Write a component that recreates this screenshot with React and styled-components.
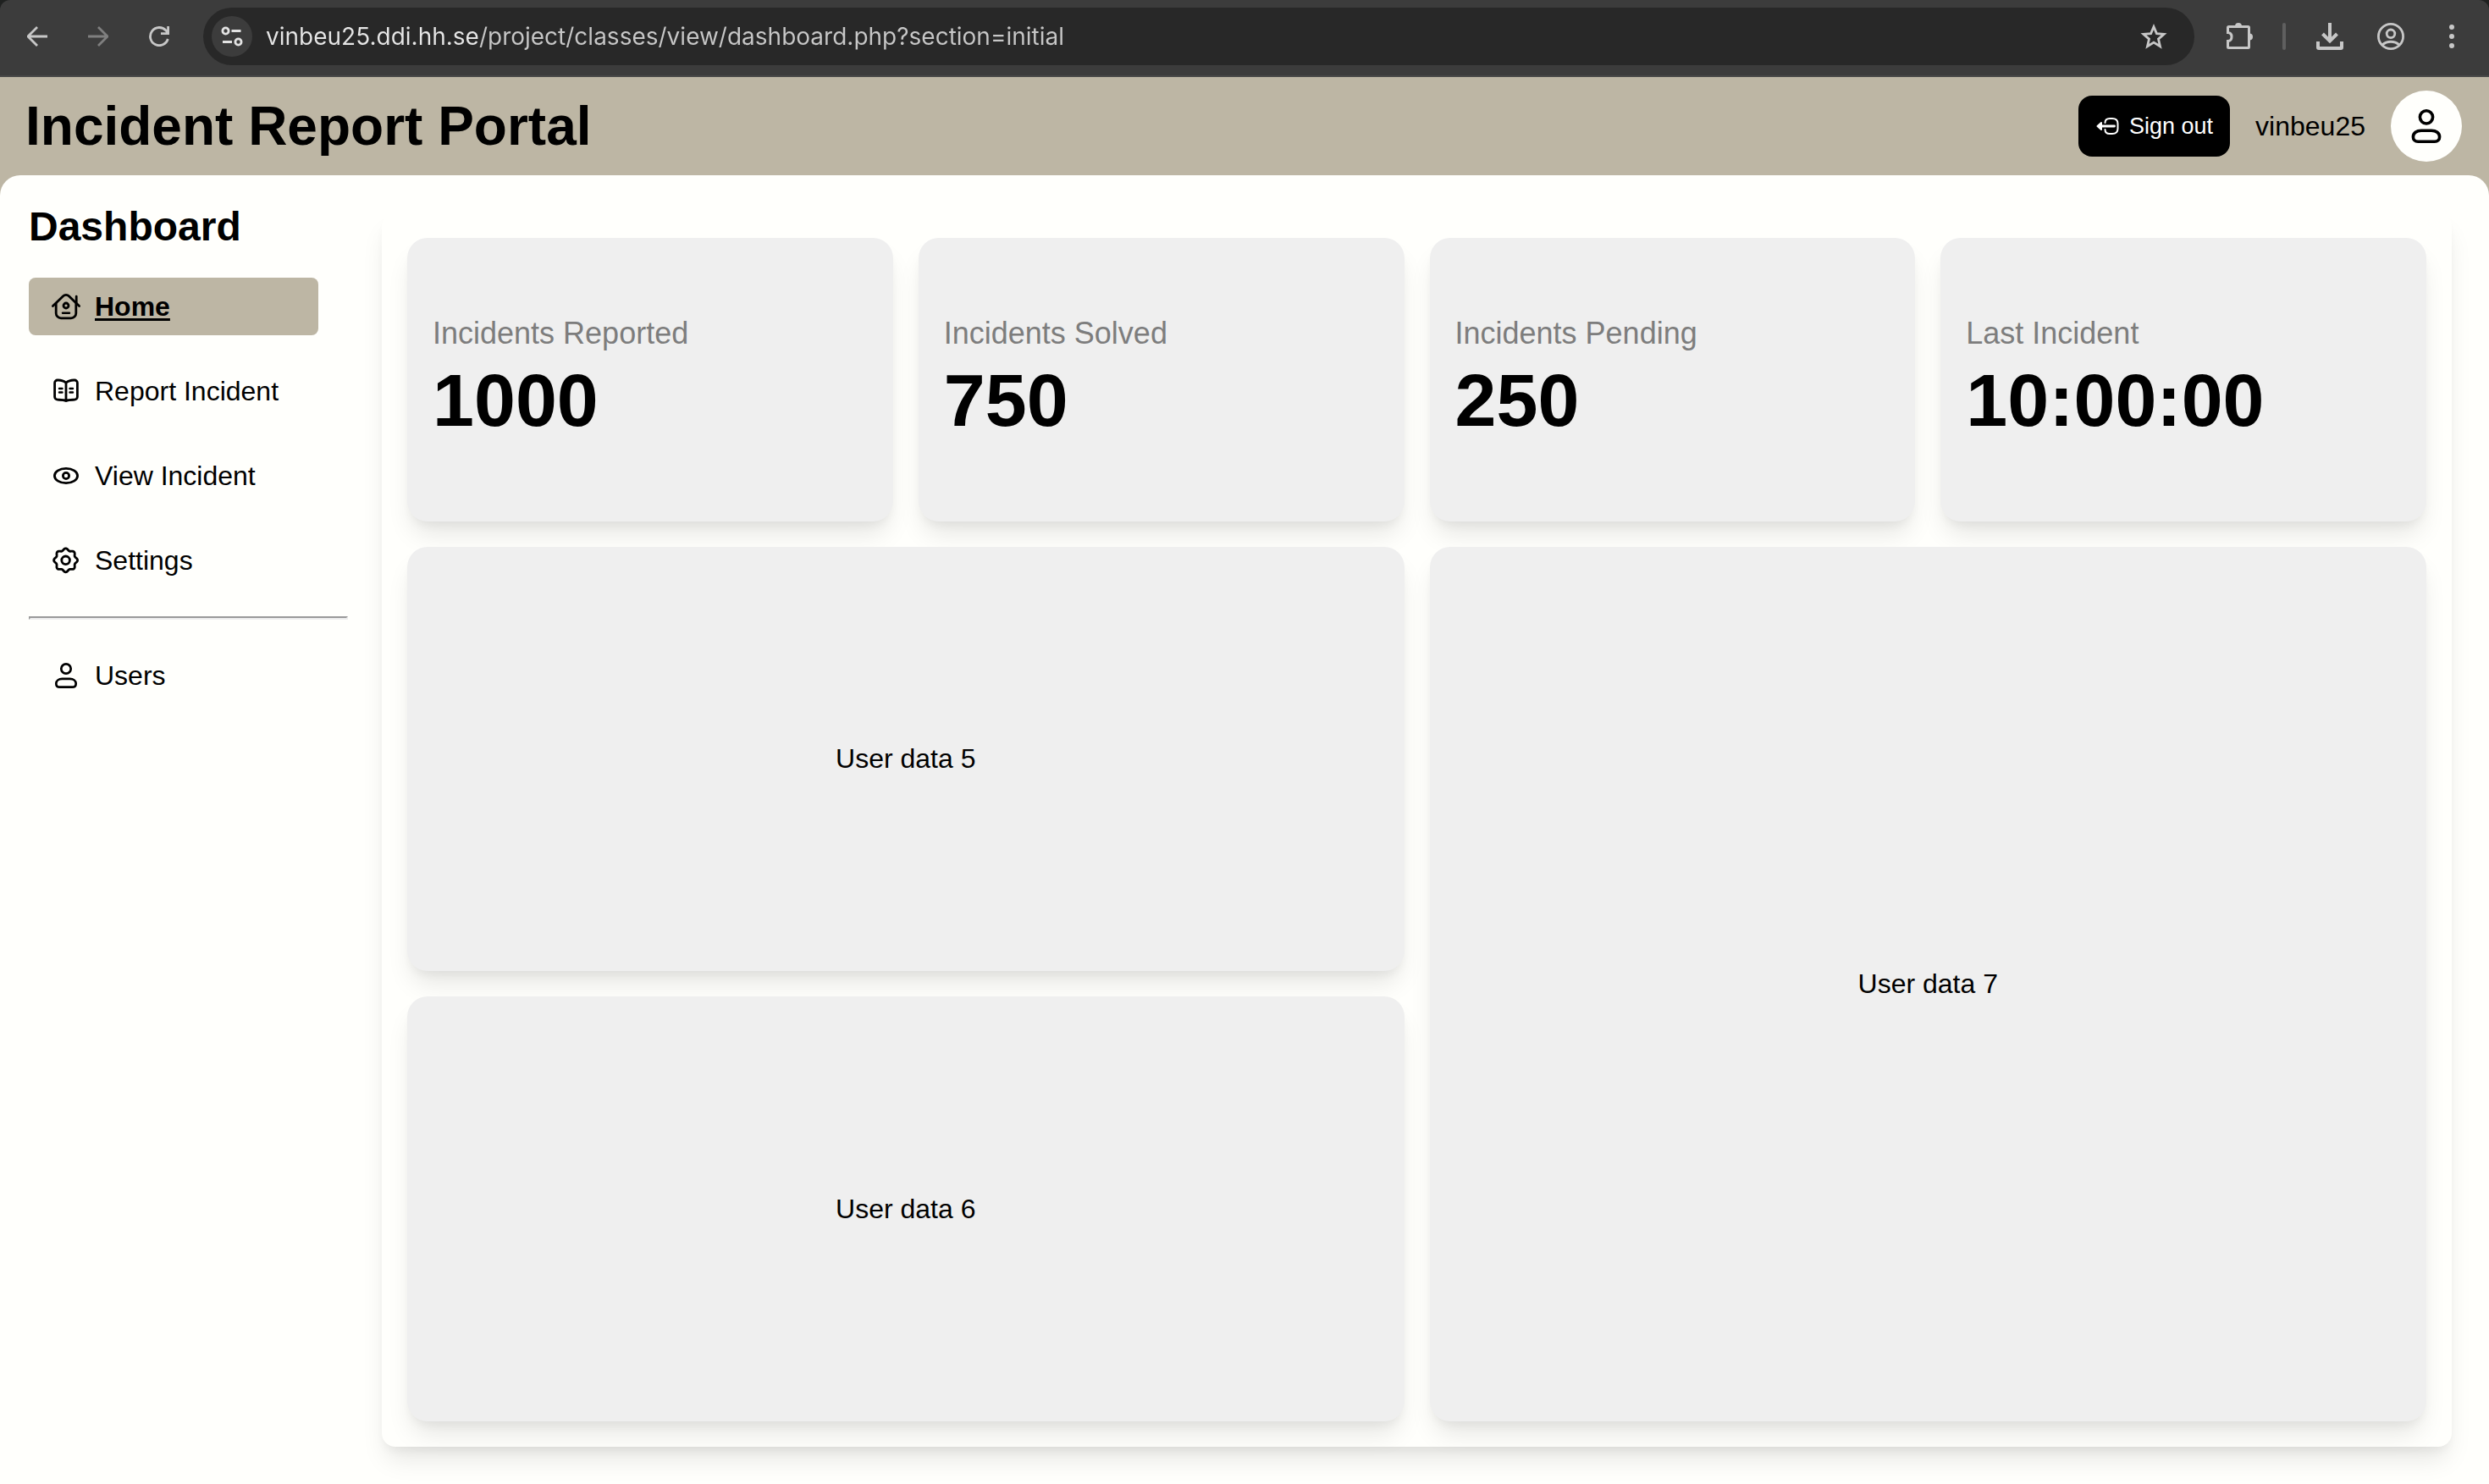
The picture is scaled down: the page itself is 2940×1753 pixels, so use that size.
import React from "react";
import styled, { createGlobalStyle, css } from "styled-components";

const sand = "#bdb6a4";
const paper = "#fffffc";
const sans = '"Liberation Sans", Arial, Helvetica, sans-serif';
const liftShadow =
  "0 20px 30px -6px rgba(0, 0, 0, 0.1), 0 8px 12px -4px rgba(0, 0, 0, 0.05)";

const GlobalStyle = createGlobalStyle`
  *, *::before, *::after { box-sizing: border-box; }
  body { margin: 0; background: #1f2120; font-family: ${sans}; color: #000; }
  button, input { font: inherit; }
`;

const Window = styled.div`
  display: flex;
  flex-direction: column;
  min-height: 100vh;
  background: ${paper};
`;

/* Browser toolbar */

const ToolbarShell = styled.div`
  background: #1f2120;
`;

const Toolbar = styled.div`
  display: flex;
  align-items: center;
  height: 91px;
  padding: 9px 8px 12px;
  background: #3c3c3c;
  border-bottom: 2px solid #474747;
  border-radius: 12px 12px 0 0;
`;

const ToolButton = styled.button`
  display: flex;
  align-items: center;
  justify-content: center;
  flex: none;
  width: 72px;
  height: 68px;
  padding: 0;
  border: 0;
  background: none;
  color: ${(p) => (p.$dim ? "#7f7f7f" : "#c7c7c7")};
`;

const AddressBar = styled.div`
  display: flex;
  align-items: center;
  flex: 1;
  height: 68px;
  margin: 0 18px 0 16px;
  padding: 0 12px 0 10px;
  border-radius: 34px;
  background: #282828;
`;

const SiteInfo = styled.button`
  display: flex;
  align-items: center;
  justify-content: center;
  flex: none;
  width: 48px;
  height: 48px;
  padding: 0;
  border: 0;
  border-radius: 50%;
  background: #3c3c3c;
  color: #e3e3e3;
`;

const AddressInput = styled.input`
  flex: 1;
  min-width: 0;
  height: 48px;
  margin-left: 16px;
  padding: 0;
  border: 0;
  outline: 0;
  font-family: Inter, Roboto, sans-serif;
  font-size: 28px;
  color: transparent;
  background: linear-gradient(90deg, #e6e6e6 252px, #c7c7c7 252px);
  background-clip: text;
`;

const Divider = styled.span`
  width: 4px;
  height: 32px;
  margin: 0 16px 0 14px;
  border-radius: 2px;
  background: #5f5f5f;
`;

/* Portal */

const Portal = styled.div`
  display: flex;
  flex-direction: column;
  flex: 1;
  background: ${sand};
`;

const Header = styled.header`
  display: flex;
  align-items: center;
  justify-content: space-between;
  padding: 16px 32px 16px 30px;
`;

const PortalTitle = styled.h1`
  margin: 0;
  font-size: 64px;
  line-height: 76px;
`;

const Account = styled.div`
  display: flex;
  align-items: center;
  gap: 30px;
  font-size: 32px;
`;

const SignOut = styled.button`
  display: flex;
  align-items: center;
  gap: 12px;
  height: 72px;
  padding: 0 20px;
  border: 0;
  border-radius: 16px;
  background: #000;
  color: #fff;
  font-size: 27px;
`;

const Avatar = styled.span`
  display: flex;
  align-items: center;
  justify-content: center;
  width: 84px;
  height: 84px;
  border-radius: 50%;
  background: ${paper};
`;

const Body = styled.div`
  display: flex;
  flex: 1;
  border-radius: 24px 24px 0 0;
  background: ${paper};
`;

const Sidebar = styled.aside`
  flex: none;
  width: 411px;
  padding: 32px 0 0 34px;
`;

const SidebarTitle = styled.h2`
  margin: 0 0 32px;
  font-size: 48px;
  line-height: 57px;
`;

const NavGroup = styled.nav`
  display: flex;
  flex-direction: column;
  gap: 32px;
`;

const NavLink = styled.a`
  display: flex;
  align-items: center;
  gap: 16px;
  width: 342px;
  height: 68px;
  padding: 0 26px;
  border-radius: 8px;
  color: #000;
  font-size: 32px;
  line-height: 38px;
  text-decoration: none;
  ${(p) =>
    p.$active &&
    css`
      background: ${sand};
      font-weight: bold;
      text-decoration: underline;
      text-decoration-thickness: 3px;
      text-underline-offset: 3px;
    `}
`;

const Rule = styled.hr`
  width: 100%;
  margin: 0;
  border: 2px solid;
  border-color: #9a9a9a #eee #eee #9a9a9a;
`;

const Panel = styled.main`
  display: grid;
  flex: 1;
  grid-template-columns: repeat(4, 1fr);
  grid-template-rows: 2fr 3fr 3fr;
  gap: 30px;
  margin: 44px 44px 44px 40px;
  padding: 30px;
  border-radius: 16px;
  background: ${paper};
  box-shadow: ${liftShadow};
`;

const Card = styled.section`
  display: flex;
  flex-direction: column;
  justify-content: center;
  padding: 30px;
  border-radius: 24px;
  background: #efefef;
  box-shadow: ${liftShadow};
  font-size: 32px;
  line-height: 38px;
  ${(p) =>
    p.$wide &&
    css`
      grid-column: span 2;
      align-items: center;
    `}
  ${(p) =>
    p.$tall &&
    css`
      grid-column: 3 / span 2;
      grid-row: 2 / span 2;
    `}
`;

const StatLabel = styled.span`
  margin-bottom: 8px;
  color: #7d7d7d;
  font-size: 36px;
  line-height: 41px;
`;

const StatValue = styled.strong`
  font-size: 88px;
  line-height: 101px;
`;

/* Icons */

function Line({ size = 36, weight = 2.8, box = 36, children }) {
  return (
    <svg
      width={size}
      height={size}
      viewBox={`0 0 ${box} ${box}`}
      fill="none"
      stroke="currentColor"
      strokeWidth={weight}
      strokeLinecap="round"
      strokeLinejoin="round"
      aria-hidden="true"
    >
      {children}
    </svg>
  );
}

const HomeIcon = () => (
  <Line>
    <path d="M2.4 17.6 14.6 5.700a4.800 4.800 0 0 1 6.800 0L33.600 17.600" />
    <path d="M6.200 14.500V26a5.800 5.800 0 0 0 5.800 5.800h12a5.800 5.800 0 0 0 5.800-5.800V14.500M30.200 14V6.200" />
    <circle cx="18" cy="17" r="3" />
    <path d="M14 25.800h8" strokeWidth="2.400" />
  </Line>
);

const BookIcon = () => (
  <Line>
    <path d="M18 8.200c-2.500-2.200-6.500-3.300-10-3.200A3.300 3.300 0 0 0 4.600 8.300v16.400a3.500 3.500 0 0 0 3.400 3.500c3.800.1 7.400-.1 10 1.300 2.600-1.400 6.200-1.200 10-1.300a3.500 3.500 0 0 0 3.400-3.500V8.300A3.300 3.300 0 0 0 28 5c-3.500-.1-7.500 1-10 3.200ZM18 8.200v21.300" />
    <path d="M10 15h3.500M10 19.500h3.500M22.500 15H26M22.500 19.500H26" strokeWidth="2.400" />
  </Line>
);

const EyeIcon = () => (
  <Line>
    <ellipse cx="18" cy="18" rx="13.600" ry="8.600" />
    <circle cx="18" cy="18" r="3.600" />
  </Line>
);

/* Eight-lobed outline: the radius swells and shrinks once per lobe. */
const gearOutline = Array.from({ length: 128 }, (_, i) => {
  const angle = (i / 128) * Math.PI * 2;
  const radius = 12.8 + 1.2 * Math.cos(angle * 8);
  return `${17.6 + radius * Math.cos(angle)},${17.8 + radius * Math.sin(angle)}`;
}).join(" ");

const GearIcon = () => (
  <Line>
    <polygon points={gearOutline} />
    <circle cx="17.600" cy="17.800" r="4.800" />
  </Line>
);

const PersonIcon = ({ size = 36 }) => (
  <Line size={size} weight={2.7}>
    <circle cx="18" cy="10" r="5.700" />
    <path d="M13.500 21.900h9c4.200 0 7.200 2.300 7.200 5.600 0 2.600-1.700 4.200-4.300 4.200H10.600c-2.600 0-4.300-1.600-4.300-4.200 0-3.300 3-5.600 7.200-5.600Z" />
  </Line>
);

const SignOutIcon = () => (
  <Line size={28} box={28} weight={2}>
    <path d="M11.500 10C11.500 7 13.500 5 17 5h3c4.200 0 6.500 2 6.500 6v6c0 4-2.300 6-6.500 6h-3c-3.500 0-5.500-2-5.500-5" />
    <path d="M22.500 14H7" strokeWidth="2.800" />
    <path d="M7 10 2.500 14 7 18Z" fill="currentColor" />
  </Line>
);

const ArrowIcon = ({ forward }) => (
  <svg width="24" height="24" viewBox="0 0 24 24" fill="none" stroke="currentColor" strokeWidth="2.800" aria-hidden="true">
    <path d={forward ? "M0 12h22M12 1l11 11-11 11" : "M24 12H2M12 1 1 12l11 11"} />
  </svg>
);

const ReloadIcon = () => (
  <svg width="24" height="24" viewBox="0 0 24 24" fill="none" stroke="currentColor" strokeWidth="2.800" aria-hidden="true">
    <path d="M22.300 15A10.600 10.600 0 1 1 20 5l2.500 3.500M22.600 0v8.600H14" />
  </svg>
);

const TuneIcon = () => (
  <svg width="26" height="26" viewBox="0 0 26 26" fill="none" stroke="currentColor" strokeWidth="2.800" aria-hidden="true">
    <circle cx="5.500" cy="6.500" r="3.600" />
    <path d="M12.500 6.500h11M2 19.500h11" />
    <circle cx="20.500" cy="19.500" r="3.600" />
  </svg>
);

const StarIcon = () => (
  <svg width="32" height="32" viewBox="0 0 32 32" fill="none" stroke="currentColor" strokeWidth="2.800" aria-hidden="true">
    <path d="m16 4.500 3.400 8.100 8.700.8-6.600 5.700 2 8.600-7.500-4.600-7.500 4.600 2-8.600-6.600-5.700 8.700-.8Z" />
  </svg>
);

const PuzzleIcon = () => (
  <svg width="36" height="36" viewBox="0 0 36 36" fill="none" stroke="currentColor" strokeWidth="3" aria-hidden="true">
    <path d="M3.500 7.500a1 1 0 0 1 1-1h23a1 1 0 0 1 1 1v23a1 1 0 0 1-1 1h-23a1 1 0 0 1-1-1v-7c3 0 4.500-2 4.500-5s-1.500-5-4.500-5Z" />
    <path d="M12 6a4 4 0 0 1 8 0ZM29 14.500a4 4 0 0 1 0 8Z" fill="currentColor" stroke="none" />
  </svg>
);

const DownloadIcon = () => (
  <svg width="32" height="32" viewBox="0 0 32 32" fill="none" stroke="currentColor" strokeWidth="4" aria-hidden="true">
    <path d="M16 0v21M7.500 13l8.500 8.500 8.500-8.500M2 22v7q0 1 1 1h26q1 0 1-1v-7" />
  </svg>
);

const ProfileIcon = () => (
  <svg width="32" height="32" viewBox="0 0 32 32" fill="none" stroke="currentColor" strokeWidth="2.800" aria-hidden="true">
    <circle cx="16" cy="16" r="14.600" />
    <circle cx="16" cy="12.800" r="4.800" />
    <path d="M6 26c5.500-5 14.500-5 20 0" />
  </svg>
);

const MenuIcon = () => (
  <svg width="32" height="32" viewBox="0 0 32 32" fill="currentColor" aria-hidden="true">
    <circle cx="16" cy="5" r="3" />
    <circle cx="16" cy="16" r="3" />
    <circle cx="16" cy="27" r="3" />
  </svg>
);

const navItems = [
  { label: "Home", Icon: HomeIcon, active: true },
  { label: "Report Incident", Icon: BookIcon },
  { label: "View Incident", Icon: EyeIcon },
  { label: "Settings", Icon: GearIcon },
];

const stats = [
  { label: "Incidents Reported", value: "1000" },
  { label: "Incidents Solved", value: "750" },
  { label: "Incidents Pending", value: "250" },
  { label: "Last Incident", value: "10:00:00" },
];

function BrowserToolbar() {
  return (
    <ToolbarShell>
      <Toolbar>
        <ToolButton aria-label="Back"><ArrowIcon /></ToolButton>
        <ToolButton aria-label="Forward" $dim><ArrowIcon forward /></ToolButton>
        <ToolButton aria-label="Reload"><ReloadIcon /></ToolButton>
        <AddressBar>
          <SiteInfo aria-label="Site information"><TuneIcon /></SiteInfo>
          <AddressInput
            type="text"
            aria-label="Address"
            spellCheck={false}
            defaultValue="vinbeu25.ddi.hh.se/project/classes/view/dashboard.php?section=initial"
          />
          <ToolButton aria-label="Bookmark"><StarIcon /></ToolButton>
        </AddressBar>
        <ToolButton aria-label="Extensions"><PuzzleIcon /></ToolButton>
        <Divider />
        <ToolButton aria-label="Downloads"><DownloadIcon /></ToolButton>
        <ToolButton aria-label="Profile"><ProfileIcon /></ToolButton>
        <ToolButton aria-label="Menu"><MenuIcon /></ToolButton>
      </Toolbar>
    </ToolbarShell>
  );
}

export default function App() {
  return (
    <Window>
      <GlobalStyle />
      <BrowserToolbar />
      <Portal>
        <Header>
          <PortalTitle>Incident Report Portal</PortalTitle>
          <Account>
            <SignOut>
              <SignOutIcon />
              Sign out
            </SignOut>
            <span>vinbeu25</span>
            <Avatar><PersonIcon size={48} /></Avatar>
          </Account>
        </Header>
        <Body>
          <Sidebar>
            <SidebarTitle>Dashboard</SidebarTitle>
            <NavGroup>
              {navItems.map(({ label, Icon, active }) => (
                <NavLink key={label} href="#" $active={active}>
                  <Icon />
                  <span>{label}</span>
                </NavLink>
              ))}
              <Rule />
              <NavLink href="#">
                <PersonIcon />
                <span>Users</span>
              </NavLink>
            </NavGroup>
          </Sidebar>
          <Panel>
            {stats.map(({ label, value }) => (
              <Card key={label}>
                <StatLabel>{label}</StatLabel>
                <StatValue>{value}</StatValue>
              </Card>
            ))}
            <Card $wide>User data 5</Card>
            <Card $wide $tall>User data 7</Card>
            <Card $wide>User data 6</Card>
          </Panel>
        </Body>
      </Portal>
    </Window>
  );
}
